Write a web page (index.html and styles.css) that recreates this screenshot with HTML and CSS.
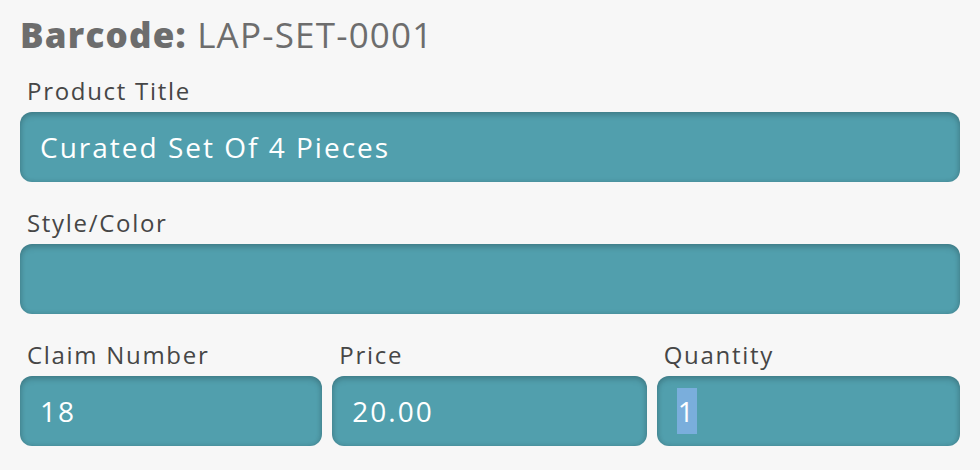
FILE: index.html
```html
<!DOCTYPE html>
<html lang="en">
<head>
    <meta charset="UTF-8">
    <meta name="viewport" content="width=device-width, initial-scale=1.0">
    <title>Product Details</title>
    <link rel="stylesheet" href="styles.css">
</head>
<body>
    <div class="product-form">
        <h1 class="barcode"><b>Barcode:</b> LAP-SET-0001</h1>

        <div class="field">
            <label>Product Title</label>
            <div class="input">Curated Set Of 4 Pieces</div>
        </div>

        <div class="field">
            <label>Style/Color</label>
            <div class="input"></div>
        </div>

        <div class="row">
            <div class="field">
                <label>Claim Number</label>
                <div class="input">18</div>
            </div>
            <div class="field">
                <label>Price</label>
                <div class="input">20.00</div>
            </div>
            <div class="field">
                <label>Quantity</label>
                <div class="input"><span class="selected">1</span></div>
            </div>
        </div>
    </div>
</body>
</html>
```

FILE: styles.css
```css
body {
    margin: 0;
    background-color: #f7f7f7;
    font-family: 'Open Sans', sans-serif;
}

.product-form {
    padding: 13px 20px 0 20px;
}

.barcode {
    margin: 0 0 19px 0;
    font-size: 35px;
    font-weight: 400;
    letter-spacing: 1.2px;
    color: #6d6d6d;
    line-height: 44px;
}

.barcode b {
    font-weight: 800;
}

.field {
    display: flex;
    flex-direction: column;
    margin-bottom: 26px;
}

.field label {
    font-size: 24px;
    letter-spacing: 1.7px;
    color: #464646;
    padding-left: 7px;
    line-height: 30px;
    margin-bottom: 6px;
}

.input {
    height: 70px;
    box-sizing: border-box;
    padding: 0 20px;
    border-radius: 12px;
    background-color: #519fad;
    box-shadow: inset 0 3px 6px rgba(0,0,0,0.18), inset 0 0 5px rgba(0,0,0,0.12);
    color: #ffffff;
    font-size: 28px;
    letter-spacing: 2px;
    display: flex;
    align-items: center;
}

.row {
    display: grid;
    grid-template-columns: 302fr 314fr 303fr;
    column-gap: 10px;
}

.row .field {
    margin-bottom: 0;
}

.selected {
    background-color: #7aaedc;
    padding: 0 1px;
    line-height: 46px;
}
```
